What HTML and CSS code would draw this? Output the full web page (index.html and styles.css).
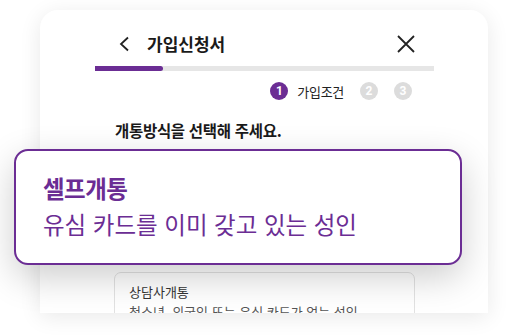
FILE: index.html
```html
<!DOCTYPE html>
<html lang="ko">
<head>
<meta charset="utf-8">
<link rel="stylesheet" href="styles.css">
</head>
<body>
<div class="stage">
  <div class="sheet">
    <div class="header">
      <svg class="back" width="12" height="16" viewBox="0 0 12 16"><path d="M10 1.5 L3 8 L10 14.5" fill="none" stroke="#222" stroke-width="1.8"/></svg>
      <h1 class="title">가입신청서</h1>
      <svg class="close" width="18" height="18" viewBox="0 0 18 18"><path d="M1 1 L17 17 M17 1 L1 17" fill="none" stroke="#222" stroke-width="1.8"/></svg>
    </div>
    <div class="progress"><div class="progress-fill" style="width:20%"></div></div>
    <div class="steps">
      <span class="step active">1</span>
      <span class="step-label">가입조건</span>
      <span class="step">2</span>
      <span class="step">3</span>
    </div>
    <p class="question">개통방식을 선택해 주세요.</p>
    <div class="spacer"></div>
    <div class="option">
      <div class="option-title">상담사개통</div>
      <div class="option-desc">청소년, 외국인 또는 유심 카드가 없는 성인</div>
    </div>
  </div>
  <div class="popout">
    <div class="popout-title">셀프개통</div>
    <div class="popout-desc">유심 카드를 이미 갖고 있는 성인</div>
  </div>
</div>
</body>
</html>
```

FILE: styles.css
```css
* { box-sizing: border-box; }
html, body { margin: 0; padding: 0; background: #ffffff; }
body {
  width: 507px;
  height: 336px;
  overflow: hidden;
  font-family: "Noto Sans CJK KR", "Noto Sans", sans-serif;
  color: #222;
}
.stage {
  position: relative;
  padding: 10px 0 0 40px;
}
.sheet {
  width: 448px;
  height: 303px;
  background: #fff;
  border-radius: 18px 18px 0 0;
  box-shadow: 0 4px 22px rgba(0,0,0,0.09);
  overflow: hidden;
  padding: 25px 73px 0 74px;
}
.header {
  display: flex;
  align-items: center;
  height: 17px;
  padding: 0 0 0 4px;
}
.back { flex: none; }
.title {
  margin: 0 0 0 17px;
  font-size: 17px;
  font-weight: 700;
  line-height: 17px;
  flex: 1;
  color: #1a1a1a;
}
.close { flex: none; }
.progress {
  margin: 14px -19px 0 -19px;
  height: 5px;
  background: #e6e6e6;
}
.progress-fill {
  height: 5px;
  background: #6b2d94;
  border-radius: 0 3px 3px 0;
}
.steps {
  display: flex;
  justify-content: flex-end;
  align-items: center;
  margin-top: 11px;
  height: 18px;
  padding-right: 3px;
}
.step {
  width: 18px;
  height: 18px;
  border-radius: 50%;
  background: #dcdcdc;
  color: #fff;
  font-family: "Roboto", "Liberation Sans", sans-serif;
  font-size: 12px;
  font-weight: 700;
  display: flex;
  align-items: center;
  justify-content: center;
  margin-left: 16px;
}
.step.active { background: #6b2d94; margin-left: 0; }
.step-label {
  font-size: 13px;
  margin-left: 9px;
  color: #222;
  letter-spacing: -0.3px;
}
.question {
  margin: 19px 0 0 1px;
  font-size: 15.5px;
  font-weight: 600;
  line-height: 22px;
  color: #1a1a1a;
  letter-spacing: -0.3px;
}
.spacer { height: 131px; }
.option {
  border: 1px solid #e2e2e2;
  border-radius: 7px;
  padding: 9px 14px 12px;
  background: #fff;
}
.option-title {
  font-size: 13px;
  line-height: 20px;
  color: #333;
}
.option-desc {
  font-size: 13px;
  line-height: 20px;
  color: #555;
}
.popout {
  position: absolute;
  left: 14px;
  top: 149px;
  width: 448px;
  height: 116px;
  background: #fff;
  border: 2px solid #6b2d94;
  border-radius: 14px;
  box-shadow: 0 12px 36px rgba(0,0,0,0.2);
  padding: 22px 27px 0;
  color: #6b2d94;
}
.popout-title {
  font-size: 23.5px;
  font-weight: 700;
  line-height: 30px;
  letter-spacing: -0.5px;
}
.popout-desc {
  font-size: 23.5px;
  line-height: 42px;
  font-weight: 400;
}
```
